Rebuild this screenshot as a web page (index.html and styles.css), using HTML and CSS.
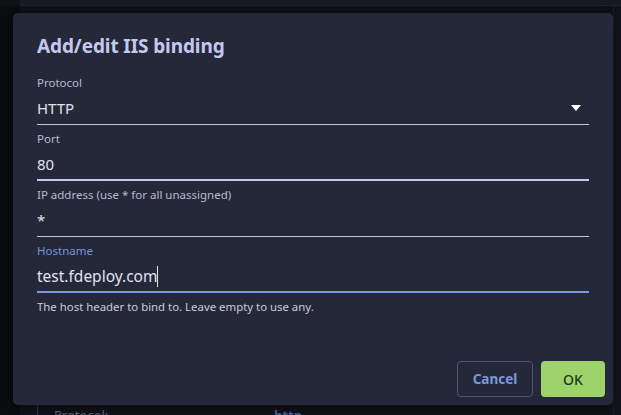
FILE: index.html
```html
<!DOCTYPE html>
<html lang="en">
<head>
<meta charset="utf-8">
<title>Add/edit IIS binding</title>
<link rel="stylesheet" href="styles.css">
</head>
<body>
<div class="page">
  <div class="page-top"></div>
  <div class="page-body">
    <div class="page-side"></div>
    <div class="page-main">
      <div class="page-row">
        <span class="page-key">Protocol:</span>
        <span class="page-val">http</span>
      </div>
    </div>
    <div class="page-right"></div>
  </div>
</div>

<div class="dialog" role="dialog" aria-labelledby="dlg-title">
  <h2 class="dialog-title" id="dlg-title">Add/edit IIS binding</h2>
  <div class="fields">
    <div class="field">
      <label class="field-label">Protocol</label>
      <div class="field-input select">
        <span class="value">HTTP</span>
        <svg class="caret" width="10" height="6" viewBox="0 0 10 6"><path d="M0 0 H10 L5 6 Z" fill="#ffffff"/></svg>
      </div>
    </div>
    <div class="field">
      <label class="field-label">Port</label>
      <div class="field-input hover"><span class="value">80</span></div>
    </div>
    <div class="field">
      <label class="field-label">IP address (use * for all unassigned)</label>
      <div class="field-input"><span class="value">*</span></div>
    </div>
    <div class="field focused">
      <label class="field-label">Hostname</label>
      <div class="field-input"><span class="value big">test.fdeploy.com</span><span class="cursor"></span></div>
      <div class="field-help">The host header to bind to. Leave empty to use any.</div>
    </div>
  </div>
  <div class="actions">
    <button class="btn btn-outline">Cancel</button>
    <button class="btn btn-primary">OK</button>
  </div>
</div>
</body>
</html>
```

FILE: styles.css
```css
* { box-sizing: border-box; }
html, body { margin: 0; padding: 0; }
body {
  width: 621px;
  height: 415px;
  overflow: hidden;
  background: #0f1017;
  font-family: "Noto Sans", "Open Sans", sans-serif;
  position: relative;
}

.page { display: flex; flex-direction: column; height: 415px; }
.page-top {
  height: 6px;
  background: #161822;
  border-bottom: 1px solid #1f212c;
  margin-left: 20px;
}
.page-body { flex: 1; display: flex; }
.page-side { width: 20px; background: #0b0c10; }
.page-main {
  flex: 1;
  display: flex;
  flex-direction: column;
  justify-content: flex-end;
  background: #101118;
}
.page-row {
  margin-left: 17px;
  border-left: 1px solid #2e3140;
  height: 10px;
  padding-left: 16px;
  display: flex;
  align-items: flex-start;
  overflow: hidden;
}
.page-key {
  width: 220px;
  font-size: 13px;
  line-height: 20px;
  color: #5d6175;
}
.page-val {
  font-size: 13px;
  line-height: 20px;
  font-weight: 700;
  color: #3a6595;
}
.page-right {
  width: 8px;
  background: #12131a;
  border-left: 1px solid #1c1e28;
}

.dialog {
  position: absolute;
  left: 13px;
  top: 13px;
  width: 600px;
  height: 392px;
  background: #252839;
  border-radius: 5px;
  padding: 22px 8px 8px 24px;
  display: flex;
  flex-direction: column;
  box-shadow: 0 2px 8px rgba(0,0,0,0.4);
}
.dialog-title {
  margin: 0;
  font-size: 19px;
  line-height: 22px;
  font-weight: 700;
  color: #c4c8ee;
  letter-spacing: -0.1px;
}
.fields {
  display: flex;
  flex-direction: column;
  margin-top: 18px;
  padding-right: 16px;
}
.field { display: flex; flex-direction: column; }
.field + .field { margin-top: 6px; }
.field-label {
  font-size: 11.5px;
  line-height: 16px;
  color: #b7bacd;
}
.field-input {
  display: flex;
  align-items: flex-end;
  height: 34px;
  padding-bottom: 6px;
  border-bottom: 1px solid #c6c8d6;
}
.field-input.hover {
  border-bottom: 2px solid #c1c7f2;
  padding-bottom: 5px;
}
.value {
  font-size: 15px;
  color: #e0e2ee;
  line-height: 20px;
}
.value.big { font-size: 15.5px; }
.select { justify-content: space-between; padding-right: 8px; }
.caret { margin-bottom: 7px; }

.focused .field-label { color: #7393dc; }
.focused .field-input { border-bottom: 2px solid #7b97e2; padding-bottom: 5px; }
.cursor {
  display: inline-block;
  width: 1px;
  height: 21px;
  background: #e0e2ee;
  margin-bottom: -1px;
}
.field-help {
  margin-top: 6px;
  font-size: 11.4px;
  line-height: 16px;
  color: #c9cbd9;
}

.actions {
  margin-top: auto;
  display: flex;
  justify-content: flex-end;
  gap: 8px;
}
.btn {
  height: 36px;
  border-radius: 4px;
  font-family: inherit;
  font-size: 13.5px;
  font-weight: 700;
  cursor: pointer;
}
.btn-outline {
  width: 76px;
  background: transparent;
  border: 1px solid #4b5479;
  color: #7a98de;
}
.btn-primary {
  width: 64px;
  background: #9dd36a;
  border: none;
  color: #21371a;
  font-weight: 500;
  font-size: 14px;
}
```
